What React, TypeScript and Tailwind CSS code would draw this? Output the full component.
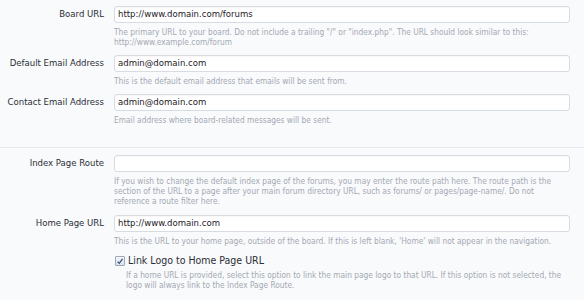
import React from "react";

const FONT = { fontFamily: '"DejaVu Sans Condensed", "DejaVu Sans", sans-serif' };

function Label({ children }: { children: React.ReactNode }) {
  return (
    <div className="flex h-[17px] items-center justify-end whitespace-nowrap text-[9.5px] text-[#2b2f36]">
      {children}
    </div>
  );
}

function TextBox({ value }: { value?: string }) {
  return (
    <div className="flex h-[17px] items-center rounded-[3px] border border-[#d7dbe2] bg-white px-[3px] text-[9.5px] text-[#1d2128] shadow-[inset_0_1px_1px_rgba(0,0,0,0.03)]">
      {value}
    </div>
  );
}

function Hint({ lines }: { lines: string[] }) {
  return (
    <div className="mt-[4px] whitespace-nowrap text-[8.3px] leading-[10px] text-[#a3a9b2]">
      {lines.map((l, i) => (
        <div key={i}>{l}</div>
      ))}
    </div>
  );
}

function Row({
  label,
  value,
  hint,
  className = "",
}: {
  label: string;
  value?: string;
  hint: string[];
  className?: string;
}) {
  return (
    <div className={`grid grid-cols-[104px_1fr] gap-x-[10px] ${className}`}>
      <Label>{label}</Label>
      <div>
        <TextBox value={value} />
        <Hint lines={hint} />
      </div>
    </div>
  );
}

export default function App() {
  return (
    <div className="h-[300px] w-[584px] overflow-hidden bg-[#f9fafc] pr-[14px]" style={FONT}>
      <div className="pt-[6px]">
        <Row
          label="Board URL"
          value="http://www.domain.com/forums"
          hint={[
            'The primary URL to your board. Do not include a trailing "/" or "index.php". The URL should look similar to this:',
            "http://www.example.com/forum",
          ]}
        />
        <Row
          className="mt-[8px]"
          label="Default Email Address"
          value="admin@domain.com"
          hint={["This is the default email address that emails will be sent from."]}
        />
        <Row
          className="mt-[8px]"
          label="Contact Email Address"
          value="admin@domain.com"
          hint={["Email address where board-related messages will be sent."]}
        />
      </div>

      <div className="mr-[-14px] mt-[22px] h-px bg-[#e6e9ef]" />

      <div className="pt-[7px]">
        <Row
          label="Index Page Route"
          hint={[
            "If you wish to change the default index page of the forums, you may enter the route path here. The route path is the",
            "section of the URL to a page after your main forum directory URL, such as forums/ or pages/page-name/. Do not",
            "reference a route filter here.",
          ]}
        />
        <Row
          className="mt-[9px]"
          label="Home Page URL"
          value="http://www.domain.com"
          hint={[
            "This is the URL to your home page, outside of the board. If this is left blank, 'Home' will not appear in the navigation.",
          ]}
        />
        <div className="mt-[8px] grid grid-cols-[104px_1fr] gap-x-[10px]">
          <div />
          <div className="pl-[1px]">
            <label className="flex h-[14px] items-center gap-[3px] text-[10.5px] text-[#2b2f36]">
              <span className="relative flex h-[10px] w-[10px] items-center justify-center rounded-[1px] border border-[#9fa8b6] bg-gradient-to-b from-[#f4f6fa] to-[#dde2ea]">
                <svg viewBox="0 0 10 10" className="h-[9px] w-[9px]">
                  <path d="M2 5.2 L4 7.4 L8.2 1.6" fill="none" stroke="#2d4a86" strokeWidth="1.5" />
                </svg>
              </span>
              Link Logo to Home Page URL
            </label>
            <div className="mt-[2px] whitespace-nowrap pl-[11px] text-[8.3px] leading-[10px] text-[#a3a9b2]">
              <div>
                If a home URL is provided, select this option to link the main page logo to that URL. If this option is not selected, the
              </div>
              <div>logo will always link to the Index Page Route.</div>
            </div>
          </div>
        </div>
      </div>
    </div>
  );
}
